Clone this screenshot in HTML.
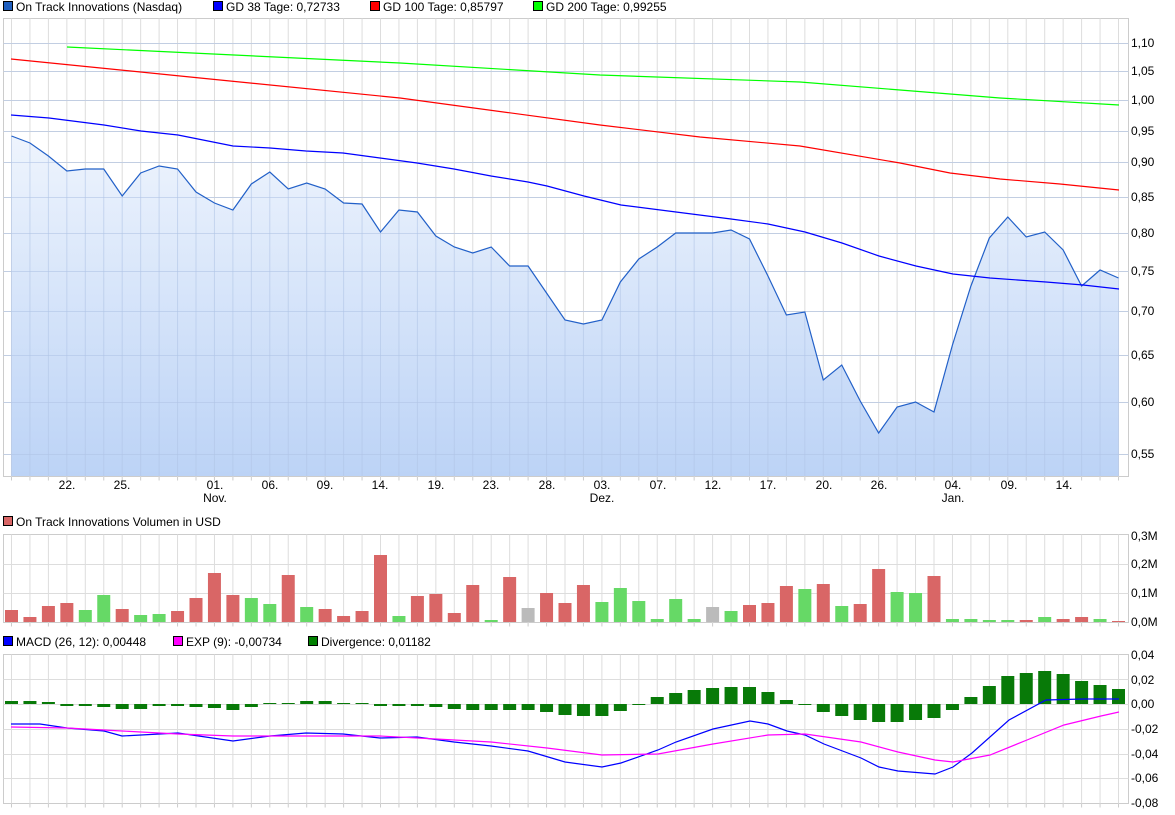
<!DOCTYPE html>
<html><head><meta charset="utf-8"><style>
body{margin:0;background:#fff;width:1175px;height:815px;overflow:hidden;font-family:"Liberation Sans",sans-serif}
svg{position:absolute;left:0;top:0}
text{font-family:"Liberation Sans",sans-serif;font-size:12px;fill:#000}
</style></head><body>
<svg id="s" width="1175" height="815" xmlns="http://www.w3.org/2000/svg">
<defs><linearGradient id="g" x1="0" y1="0" x2="0" y2="1"><stop offset="0" stop-color="#eef4fd"/><stop offset="1" stop-color="#bcd3f6"/></linearGradient></defs>
<g id="grid"></g>
<g id="plot"></g>
<rect x="3.5" y="1.5" width="9" height="9" fill="#1f5fbf" stroke="#000"/><text x="16" y="11">On Track Innovations (Nasdaq)</text>
<rect x="213.5" y="1.5" width="9" height="9" fill="#0000ff" stroke="#000"/><text x="226" y="11">GD 38 Tage: 0,72733</text>
<rect x="370.5" y="1.5" width="9" height="9" fill="#ff0000" stroke="#000"/><text x="383" y="11">GD 100 Tage: 0,85797</text>
<rect x="533.5" y="1.5" width="9" height="9" fill="#00ff00" stroke="#000"/><text x="546" y="11">GD 200 Tage: 0,99255</text>
<rect x="3.5" y="516.5" width="9" height="9" fill="#d96666" stroke="#000"/><text x="16" y="526">On Track Innovations Volumen in USD</text>
<rect x="3.5" y="636.5" width="9" height="9" fill="#0000ff" stroke="#000"/><text x="16" y="646">MACD (26, 12): 0,00448</text>
<rect x="173.5" y="636.5" width="9" height="9" fill="#ff00ff" stroke="#000"/><text x="186" y="646">EXP (9): -0,00734</text>
<rect x="308.5" y="636.5" width="9" height="9" fill="#008000" stroke="#000"/><text x="321" y="646">Divergence: 0,01182</text>
<g>
<text x="1131" y="47">1,10</text><text x="1131" y="75">1,05</text><text x="1131" y="104">1,00</text><text x="1131" y="135">0,95</text><text x="1131" y="166">0,90</text><text x="1131" y="201">0,85</text><text x="1131" y="237">0,80</text><text x="1131" y="275">0,75</text><text x="1131" y="315">0,70</text><text x="1131" y="359">0,65</text><text x="1131" y="406">0,60</text><text x="1131" y="458">0,55</text>
<text x="1131" y="540">0,3M</text><text x="1131" y="568">0,2M</text><text x="1131" y="597">0,1M</text><text x="1131" y="626">0,0M</text>
<text x="1131" y="659">0,04</text><text x="1131" y="684">0,02</text><text x="1131" y="708">0,00</text><text x="1131" y="733">-0,02</text><text x="1131" y="758">-0,04</text><text x="1131" y="782">-0,06</text><text x="1131" y="807">-0,08</text>
</g>
<g text-anchor="middle">
<text x="67" y="489">22.</text><text x="122" y="489">25.</text><text x="215" y="489">01.</text><text x="215" y="502">Nov.</text><text x="270" y="489">06.</text><text x="325" y="489">09.</text><text x="380" y="489">14.</text><text x="436" y="489">19.</text><text x="491" y="489">23.</text><text x="547" y="489">28.</text><text x="602" y="489">03.</text><text x="602" y="502">Dez.</text><text x="658" y="489">07.</text><text x="713" y="489">12.</text><text x="768" y="489">17.</text><text x="824" y="489">20.</text><text x="879" y="489">26.</text><text x="953" y="489">04.</text><text x="953" y="502">Jan.</text><text x="1009" y="489">09.</text><text x="1064" y="489">14.</text>
</g>
</svg>
<script>
var N='http://www.w3.org/2000/svg',grid=document.getElementById('grid'),plot=document.getElementById('plot');
function el(p,t,a){var e=document.createElementNS(N,t);for(var k in a)e.setAttribute(k,a[k]);p.appendChild(e);return e}
var xs=[];for(var i=0;i<61;i++)xs.push(11.5+i*18.45);
var L=3.5,R=1128.5;
function panel(t,b,hs){el(grid,'rect',{x:L,y:t,width:R-L,height:b-t,fill:'#fff',stroke:'#ccc'});
 xs.forEach(function(x){el(grid,'line',{x1:x,y1:t,x2:x,y2:b,stroke:'#ddd'})});
 hs.forEach(function(y){el(grid,'line',{x1:L,y1:y,x2:R,y2:y,stroke:'#ddd'})});
 xs.forEach(function(x){el(grid,'line',{x1:x,y1:b,x2:x,y2:b+4,stroke:'#ccc'})});}
var mh=[43,71,100,131,162,197,233,271,311,355,402,454];
panel(18.5,476.5,mh.map(function(y){return y+.5}));
panel(534.5,622.5,[564,593].map(function(y){return y+.5}));
panel(654.5,803.5,[679,704,729,754,778].map(function(y){return y+.5}));
var p=[136,143,156,171,169,169,196,173,166,169,192,203,210,184,172,189,183,189,203,204,232,210,212,236,247,253,247,266,266,293,320,324,320,282,259,247,233,233,233,230,239,276,315,312,380,365,401,433,407,402,412,345,286,238,217,237,232,250,286,270,278];
var d='M'+xs[0]+' 476';p.forEach(function(y,i){d+=' L'+xs[i]+' '+y});d+=' L'+xs[60]+' 476 Z';
el(plot,'path',{d:d,fill:'url(#g)'});
mh.forEach(function(y){el(plot,'line',{x1:L,y1:y+.5,x2:R,y2:y+.5,stroke:'#b0c4e6','stroke-opacity':.6})});
xs.forEach(function(x,i){el(plot,'line',{x1:x,y1:p[i],x2:x,y2:476,stroke:'#b0c4e6','stroke-opacity':.6})});
function line(pts,c,w){el(plot,'polyline',{points:pts.join(' '),fill:'none',stroke:c,'stroke-width':w||1.2})}
line(p.map(function(y,i){return xs[i]+','+y}),'#2260c8',1.2);
line([11,115,49,118,104,125,141,131,178,135,233,146,270,148,306,151,343,153,380,158,417,163,454,169,491,176,528,182,547,186,584,196,621,205,676,212,731,219,768,224,805,232,842,243,879,256,916,266,953,274,990,278,1046,282,1083,285,1119,289],'#0000ff');
line([11,59,200,78,400,98,600,125,700,137,800,146,900,163,950,173,1000,179,1060,184,1119,190],'#ff0000');
line([67,47,400,63,600,75,800,82,900,90,1000,98,1119,105],'#00ff00');
var v=[[610,'r'],[617,'r'],[606,'r'],[603,'r'],[610,'g'],[595,'g'],[609,'r'],[615,'g'],[614,'g'],[611,'r'],[598,'r'],[573,'r'],[595,'r'],[598,'g'],[604,'g'],[575,'r'],[607,'g'],[609,'r'],[616,'r'],[611,'r'],[555,'r'],[616,'g'],[596,'r'],[594,'r'],[613,'r'],[585,'r'],[620,'g'],[577,'r'],[608,'y'],[593,'r'],[603,'r'],[585,'r'],[602,'g'],[588,'g'],[601,'g'],[619,'g'],[599,'g'],[619,'g'],[607,'y'],[611,'g'],[605,'r'],[603,'r'],[586,'r'],[589,'g'],[584,'r'],[606,'g'],[604,'r'],[569,'r'],[592,'g'],[593,'g'],[576,'r'],[619,'g'],[619,'g'],[620,'g'],[620,'g'],[620,'r'],[617,'g'],[619,'r'],[617,'r'],[619,'g'],[621,'r']];
var col={r:'#d96666',g:'#66d966',y:'#bbbbbb'};
v.forEach(function(b,i){el(plot,'rect',{x:xs[i]-6.5,y:b[0],width:13,height:622-b[0],fill:col[b[1]]})});
var dv=[3,3,2,-2,-2,-3,-5,-5,-2,-2,-3,-4,-6,-3,1,1,3,3,1,1,-2,-2,-2,-3,-5,-6,-6,-6,-6,-8,-11,-12,-12,-7,-1,7,11,14,16,17,17,12,4,0,-8,-12,-16,-18,-18,-16,-14,-6,7,18,28,31,33,30,23,19,15];
dv.forEach(function(h,i){el(plot,'rect',{x:xs[i]-6.5,y:h>0?704-h:704,width:13,height:Math.max(Math.abs(h),1),fill:'#087a08'})});
line([11,724,40,724,67,728,104,731,122,736,141,735,178,733,233,741,270,736,306,733,343,734,380,738,417,737,454,742,491,746,528,751,565,762,602,767,621,763,658,750,676,742,713,729,750,721,768,724,787,731,805,735,824,744,861,758,879,767,898,771,935,774,953,767,972,753,1009,720,1046,700,1083,699,1119,699],'#0000ff');
line([11,727,67,728,122,731,178,734,233,736,306,736,380,736,436,739,491,742,547,748,602,755,658,754,713,744,768,735,805,734,861,742,898,752,935,760,953,762,990,755,1027,740,1064,725,1101,716,1119,712],'#ff00ff');
</script>
</body></html>
